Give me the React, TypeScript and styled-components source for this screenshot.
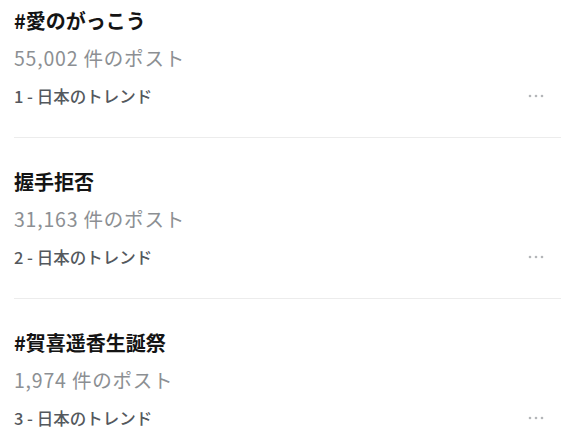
import React from 'react'
import { createGlobalStyle, styled } from 'styled-components'

const trends = [
  { title: '#愛のがっこう', count: '55,002', rank: 1 },
  { title: '握手拒否', count: '31,163', rank: 2 },
  { title: '#賀喜遥香生誕祭', count: '1,974', rank: 3 },
]

const GlobalStyle = createGlobalStyle`
  body {
    margin: 0;
    background: #ffffff;
    font-family: "Noto Sans CJK JP", "Noto Sans", sans-serif;
  }
`

const List = styled.div`
  padding-top: 8px;
`

const Item = styled.div`
  padding: 0 15px 0 14px;
  & + & {
    margin-top: 31px;
  }
`

const Title = styled.div`
  font-size: 20px;
  line-height: 26px;
  font-weight: 700;
  color: #141414;
`

const Count = styled.div`
  margin-top: 12px;
  font-size: 19.5px;
  line-height: 24px;
  letter-spacing: 0.8px;
  color: #8c8f93;
`

const RankRow = styled.div`
  margin-top: 16px;
  display: flex;
  align-items: center;
  justify-content: space-between;
  padding-right: 16px;
`

const Rank = styled.div`
  font-size: 16.5px;
  line-height: 20px;
  font-weight: 500;
  color: #54585d;
`

const Divider = styled.div<{ $hidden?: boolean }>`
  margin-top: 31px;
  height: 1px;
  background: ${p => (p.$hidden ? 'transparent' : '#ececec')};
`

const Dots = () => (
  <svg width="18" height="4" viewBox="0 0 18 4">
    {[3, 9, 15].map(x => <circle key={x} cx={x} cy="2" r="1.3" fill="#b4b6b9" />)}
  </svg>
)

const App = () => {
  return (
    <>
      <GlobalStyle />
      <List>
        {trends.map((t, i) => (
          <Item key={t.rank}>
            <Title>{t.title}</Title>
            <Count>{t.count} 件のポスト</Count>
            <RankRow>
              <Rank>{t.rank} - 日本のトレンド</Rank>
              <Dots />
            </RankRow>
            <Divider $hidden={i === trends.length - 1} />
          </Item>
        ))}
      </List>
    </>
  )
}
export default App
